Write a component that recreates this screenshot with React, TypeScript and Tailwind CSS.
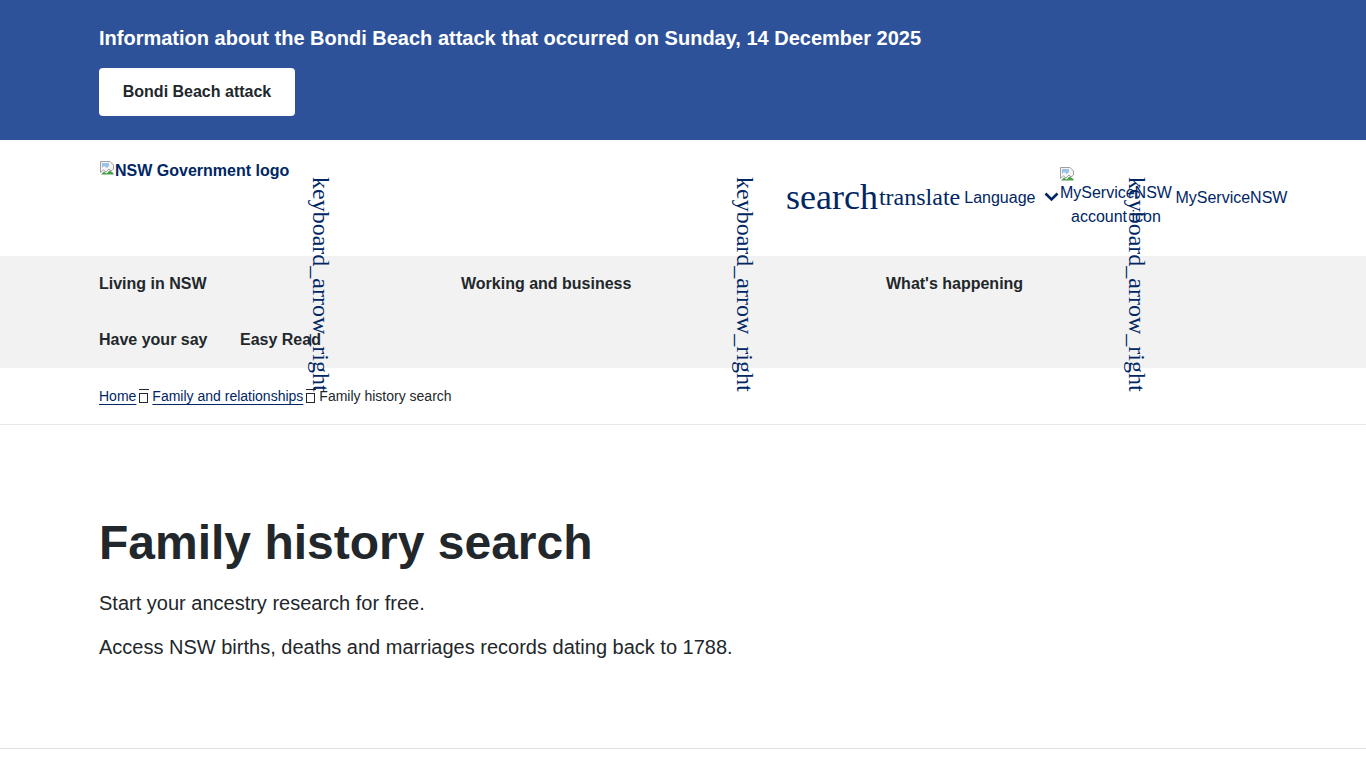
import React from "react";

function BrokenImg() {
  return (
    <svg width="16" height="16" viewBox="0 0 16 16" className="shrink-0">
      <path d="M1.5 1.5 H11 L14.5 5 V9 L12 11 L10 9 L7 12 L4.5 10 L1.5 12.5 Z" fill="#f4f4f4" stroke="#a0a0a0" />
      <path d="M3 3 H10 V6 L8 8 L5 6 L3 8 Z" fill="#9cc3e6" />
      <path d="M2 14.5 L5 11.5 L7.5 13.5 L10.5 10.5 L14.5 13 V14.5 Z" fill="#4aa04a" />
    </svg>
  );
}

function Tofu() {
  return (
    <span className="inline-flex flex-col items-start mx-[3px] align-[-3px]">
      <span className="block w-[10px] h-[1px] bg-[#22272b]" />
      <span className="block w-[9px] h-[10px] mt-[3px] border border-[#22272b]" />
    </span>
  );
}

function VText({ left }: { left: string }) {
  return (
    <div
      className={`absolute top-[177px] ${left} w-[24px] text-[24px] leading-[24px] text-[#002664] [writing-mode:vertical-rl] font-['Liberation_Serif',serif] whitespace-nowrap`}
    >
      keyboard_arrow_right
    </div>
  );
}

export default function App() {
  return (
    <div className="relative min-h-[768px] overflow-hidden bg-white font-['Liberation_Sans',Arial,sans-serif] text-[#22272b]">
      {/* Alert banner */}
      <div className="bg-[#2e5299] px-[99px] pt-[26px] pb-[24px]">
        <p className="text-[20px] leading-[24px] font-bold text-white">
          Information about the Bondi Beach attack that occurred on Sunday, 14 December 2025
        </p>
        <div className="mt-[18px] flex h-[48px] w-[196px] items-center justify-center rounded-[4px] bg-white text-[16px] font-bold text-[#22272b]">
          Bondi Beach attack
        </div>
      </div>

      {/* Header */}
      <div className="flex h-[116px] px-[99px]">
        <div className="w-[688px] shrink-0 pt-[20px]">
          <div className="flex items-start">
            <BrokenImg />
            <span className="text-[16px] leading-none font-bold text-[#002664] mt-[3px]">NSW Government logo</span>
          </div>
        </div>
        <div className="flex shrink-0 items-start text-[#002664]">
          <span className="-ml-[1px] mt-[39px] text-[36px] leading-none font-['Liberation_Serif',serif]">search</span>
          <span className="ml-[1px] mt-[45px] text-[24px] leading-none font-['Liberation_Serif',serif]">translate</span>
          <span className="ml-[4px] mt-[50px] text-[16px] leading-none">Language</span>
          <svg className="ml-[9px] mt-[52px]" width="15" height="10" viewBox="0 0 15 10">
            <path d="M1.5 1.5 L7.5 7.5 L13.5 1.5" fill="none" stroke="#002664" strokeWidth="2.6" />
          </svg>
          <div className="relative mt-[26px] w-[113px] text-center">
            <BrokenImg />
            <div className="-mt-[1px] text-[16px] leading-[24px]">MyServiceNSW account icon</div>
          </div>
          <span className="ml-[3px] mt-[50px] text-[16px] leading-none">MyServiceNSW</span>
        </div>
      </div>

      {/* Nav */}
      <div className="bg-[#f2f2f2] px-[99px] text-[16px] font-bold text-[#22272b]">
        <div className="flex h-[56px] items-center">
          <span className="w-[362px]">Living in NSW</span>
          <span className="w-[425px]">Working and business</span>
          <span>What's happening</span>
        </div>
        <div className="flex h-[56px] items-center">
          <span className="w-[141px]">Have your say</span>
          <span>Easy Read</span>
        </div>
      </div>

      {/* Breadcrumb */}
      <div className="flex h-[57px] items-center border-b border-[#e8e8e8] px-[99px] text-[14px]">
        <span className="text-[#002664] underline underline-offset-[3px]">Home</span>
        <Tofu />
        <span className="text-[#002664] underline underline-offset-[3px]">Family and relationships</span>
        <Tofu />
        <span className="text-[#22272b]">Family history search</span>
      </div>

      {/* Hero */}
      <div className="border-b border-[#e0e0e0] px-[99px] pt-[90px] pb-[87px]">
        <h1 className="text-[48px] leading-[56px] font-bold text-[#22272b]">Family history search</h1>
        <p className="mt-[18px] text-[20px] leading-[28px]">Start your ancestry research for free.</p>
        <p className="mt-[16px] text-[20px] leading-[28px]">
          Access NSW births, deaths and marriages records dating back to 1788.
        </p>
      </div>

      <VText left="left-[309px]" />
      <VText left="left-[733px]" />
      <VText left="left-[1125px]" />
    </div>
  );
}
